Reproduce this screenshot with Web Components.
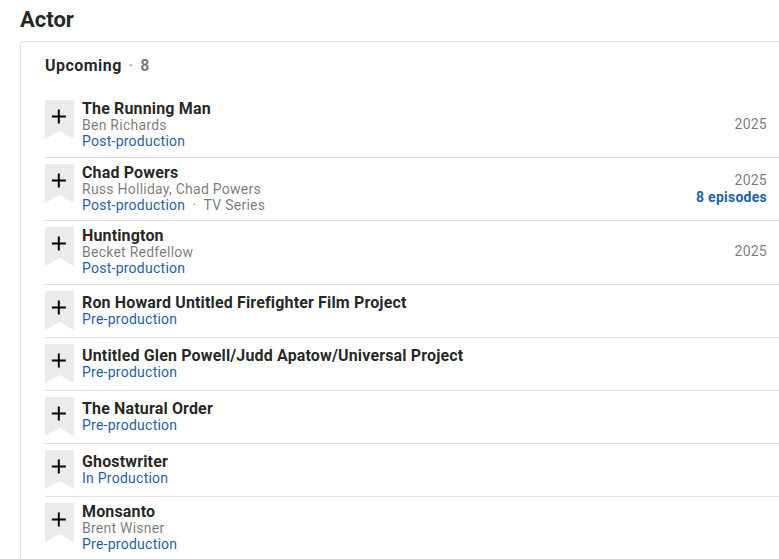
<!DOCTYPE html>
<html><head><meta charset="utf-8"><style>
html,body{margin:0;padding:0;background:#fff;overflow:hidden;height:559px;font-family:Roboto,sans-serif}
</style></head><body>
<template id="row-t"><style>
:host{display:flex;box-sizing:border-box;min-height:53px;border-bottom:1px solid #e0e0e0;padding:6px 12px 7px 0;align-items:flex-start;font-family:Roboto,sans-serif}
:host([tall]){padding-bottom:8px}
:host([last]){border-bottom:0}
.bm{flex:none;width:29px;height:39px;margin-right:8px;display:block}
.main{flex:1;min-width:0;display:flex;flex-direction:column;justify-content:center;align-self:stretch}
.t{font-size:16px;font-weight:700;line-height:17px;letter-spacing:.15px;color:rgba(0,0,0,.87)}
.s{font-size:14px;line-height:16px;letter-spacing:.25px;color:rgba(0,0,0,.54)}
.st{font-size:14px;line-height:16px;letter-spacing:.25px;color:rgba(0,0,0,.54)}
.st b{font-weight:400;color:#1f5fa8}
.r{flex:none;align-self:center;text-align:right;font-size:14px;line-height:17px;letter-spacing:.25px;color:rgba(0,0,0,.54)}
.r b{display:block;font-weight:700;color:#1f5fa8}
.dot{margin:0 3.5px}
</style>
<svg class="bm" viewBox="0 0 29 39"><path d="M0 0H29V39L14.500 31 0 39Z" fill="#ebebeb"/><path d="M13.800 9.500V23.500M6.800 16.500H20.800" stroke="#000" stroke-width="2" fill="none"/></svg>
<div class="main"><div class="t"></div><div class="s"></div><div class="st"><b></b></div></div>
<div class="r"></div></template>
<template id="card-t"><style>
:host{display:block;box-sizing:border-box;margin-left:20px;width:759px;border:1px solid #e0e0e0;border-right:0;border-radius:4px 0 0 0;padding:11px 0 0 24px;font-family:Roboto,sans-serif}
h3{margin:0 0 16px;font-size:16px;line-height:25px;font-weight:700;letter-spacing:.45px;color:rgba(0,0,0,.87)}
h3 span{font-weight:700;color:rgba(0,0,0,.54)}
h3 i{font-style:normal;font-weight:400;color:rgba(0,0,0,.54);margin:0 7px}
</style><h3><slot name="title"></slot><i>·</i><span><slot name="count"></slot></span></h3><div class="rows"><slot></slot></div></template>
<template id="sec-t"><style>
:host{display:block;font-family:Roboto,sans-serif}
h2{margin:0;padding:6px 0 7px 20px;font-size:22px;line-height:28px;font-weight:700;color:rgba(0,0,0,.87)}
</style><h2><slot name="heading"></slot></h2><slot></slot></template>

<credit-section><span slot="heading">Actor</span>
<credit-card><span slot="title">Upcoming</span><span slot="count">8</span>
<credit-row tall t="The Running Man" s="Ben Richards" st="Post-production" y="2025"></credit-row>
<credit-row t="Chad Powers" s="Russ Holliday, Chad Powers" st="Post-production" k="TV Series" y="2025" e="8 episodes"></credit-row>
<credit-row tall t="Huntington" s="Becket Redfellow" st="Post-production" y="2025"></credit-row>
<credit-row t="Ron Howard Untitled Firefighter Film Project" st="Pre-production"></credit-row>
<credit-row t="Untitled Glen Powell/Judd Apatow/Universal Project" st="Pre-production"></credit-row>
<credit-row t="The Natural Order" st="Pre-production"></credit-row>
<credit-row t="Ghostwriter" st="In Production"></credit-row>
<credit-row tall t="Monsanto" s="Brent Wisner" st="Pre-production" last></credit-row>
</credit-card></credit-section>
<script>
const mk=(n,id,f)=>customElements.define(n,class extends HTMLElement{connectedCallback(){if(this.shadowRoot)return;const r=this.attachShadow({mode:'open'});r.appendChild(document.getElementById(id).content.cloneNode(true));f&&f(this,r)}});
mk('credit-section','sec-t');mk('credit-card','card-t');
mk('credit-row','row-t',(h,r)=>{const a=n=>h.getAttribute(n);
r.querySelector('.t').textContent=a('t');
const s=r.querySelector('.s');a('s')?s.textContent=a('s'):s.remove();
const st=r.querySelector('.st');st.querySelector('b').textContent=a('st');
if(a('k')){const d=document.createElement('span');d.className='dot';d.textContent=' · ';st.append(d,a('k'))}
const y=r.querySelector('.r');if(a('y'))y.append(a('y'));if(a('e')){const b=document.createElement('b');b.textContent=a('e');y.append(b)}});
</script></body></html>
